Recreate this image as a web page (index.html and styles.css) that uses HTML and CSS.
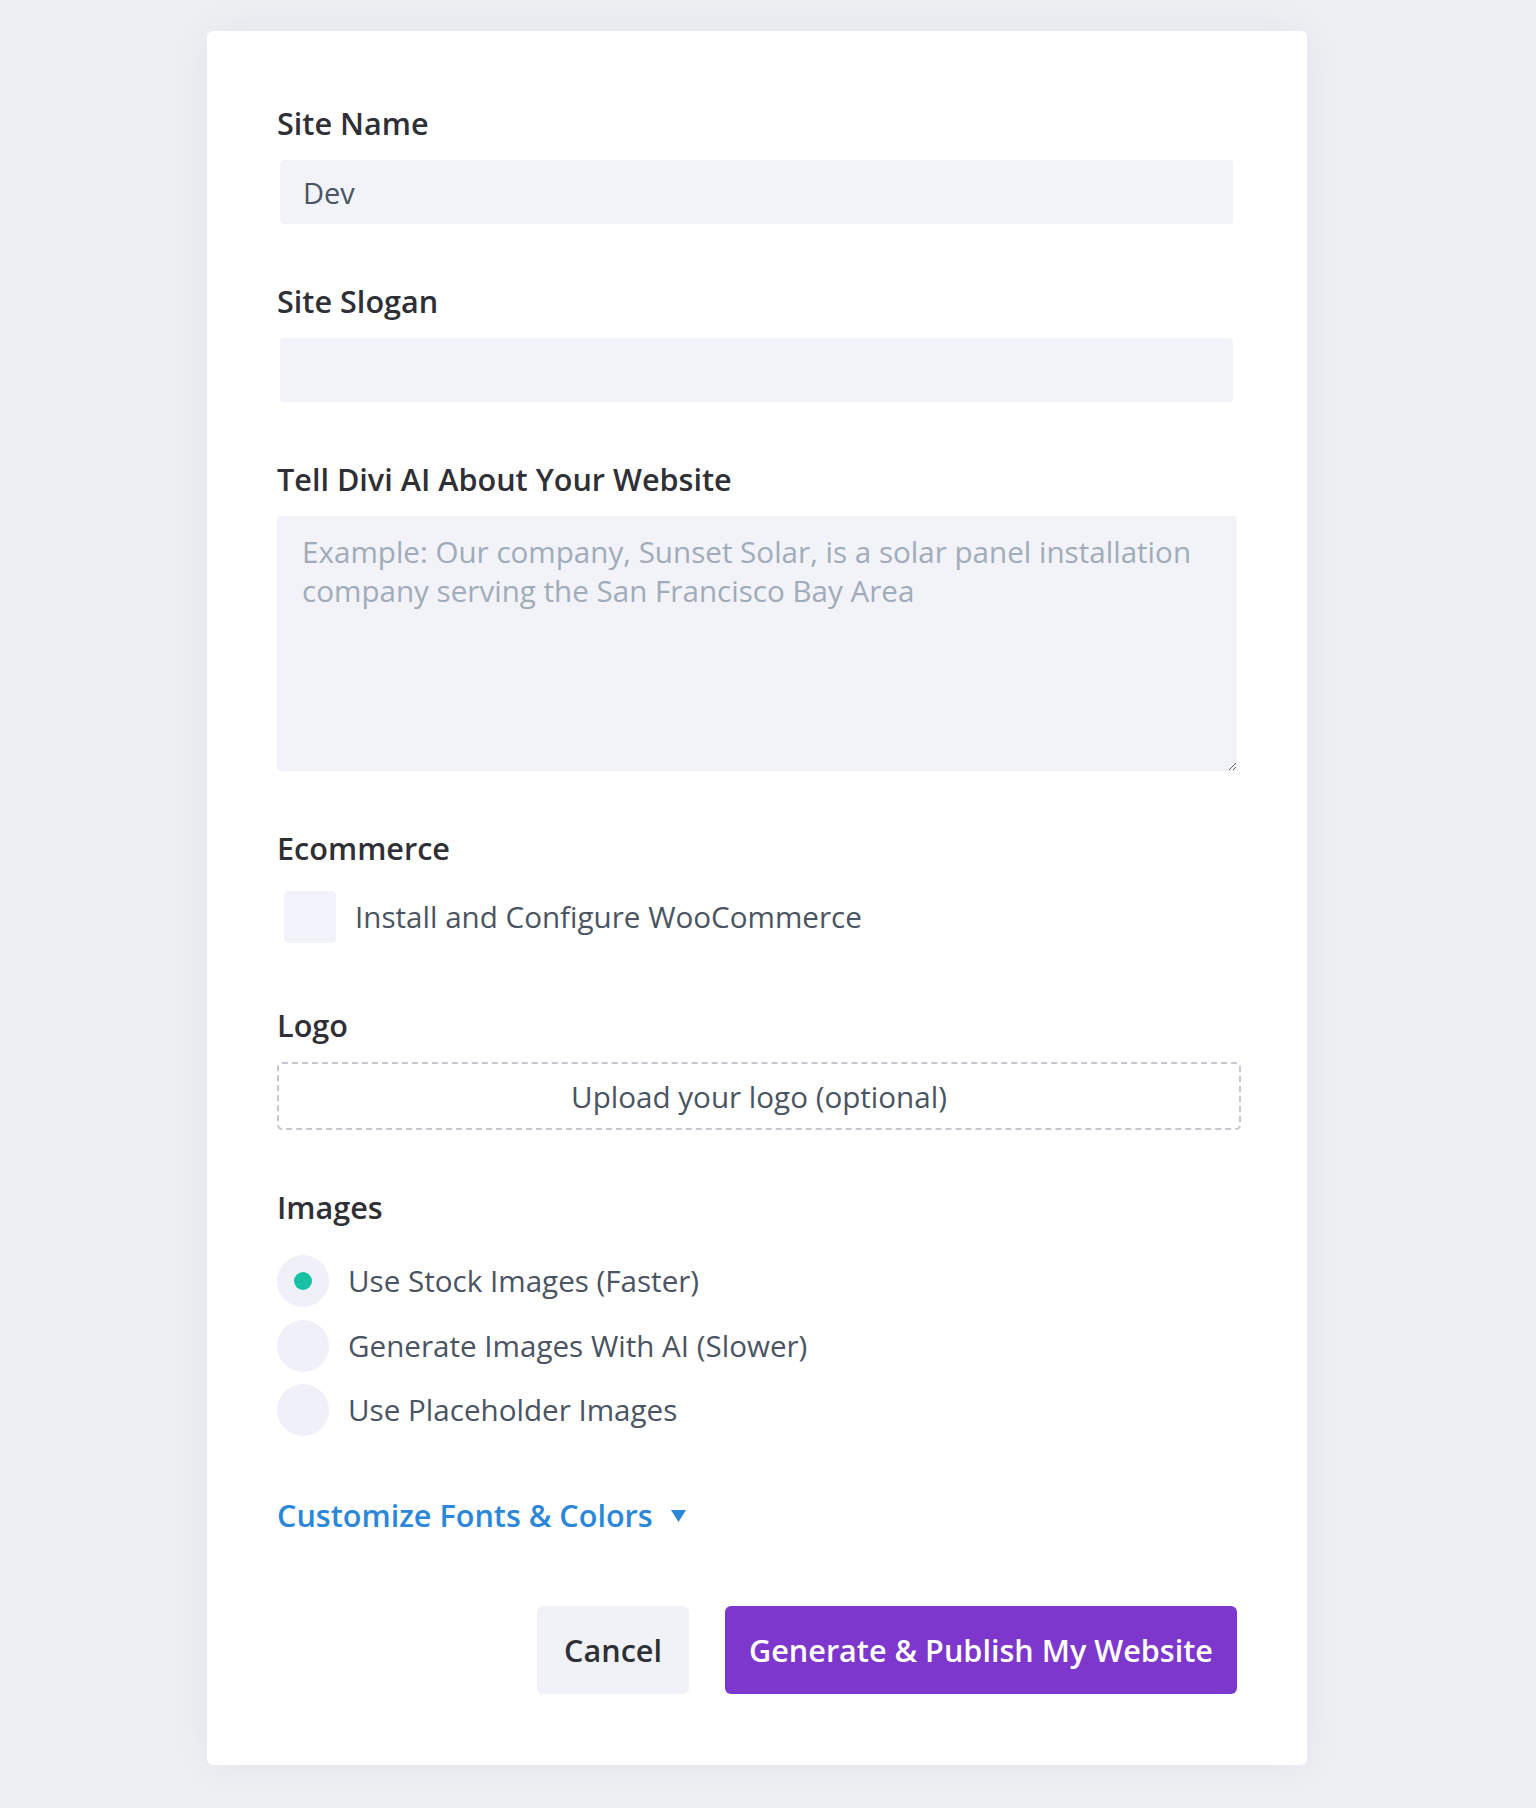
FILE: index.html
```html
<!DOCTYPE html>
<html lang="en">
<head>
<meta charset="utf-8">
<title>Divi AI – Generate Website</title>
<link rel="stylesheet" href="styles.css">
</head>
<body>
<div class="page">
  <form class="card">
    <div class="group">
      <label class="label" for="site-name">Site Name</label>
      <input class="field" id="site-name" type="text" value="Dev">
    </div>
    <div class="group">
      <label class="label" for="site-slogan">Site Slogan</label>
      <input class="field" id="site-slogan" type="text" value="">
    </div>
    <div class="group">
      <label class="label" for="about">Tell Divi AI About Your Website</label>
      <textarea class="area" id="about" placeholder="Example: Our company, Sunset Solar, is a solar panel installation company serving the San Francisco Bay Area"></textarea>
    </div>
    <div class="group">
      <div class="label">Ecommerce</div>
      <div class="check-row">
        <span class="checkbox"></span>
        <span class="option-text">Install and Configure WooCommerce</span>
      </div>
    </div>
    <div class="group">
      <div class="label">Logo</div>
      <div class="upload">Upload your logo (optional)</div>
    </div>
    <div class="group group-images">
      <div class="label">Images</div>
      <div class="radios">
        <div class="radio-row">
          <span class="radio"><span class="dot"></span></span>
          <span class="option-text">Use Stock Images (Faster)</span>
        </div>
        <div class="radio-row">
          <span class="radio"></span>
          <span class="option-text">Generate Images With AI (Slower)</span>
        </div>
        <div class="radio-row">
          <span class="radio"></span>
          <span class="option-text">Use Placeholder Images</span>
        </div>
      </div>
    </div>
    <div class="customize">
      <span>Customize Fonts &amp; Colors</span>
      <svg class="caret" width="15" height="12" viewBox="0 0 15 12"><polygon points="0,0 15,0 7.5,12" fill="#2b87da"/></svg>
    </div>
    <div class="actions">
      <button type="button" class="btn btn-cancel">Cancel</button>
      <button type="button" class="btn btn-primary">Generate &amp; Publish My Website</button>
    </div>
  </form>
</div>
</body>
</html>
```

FILE: styles.css
```css
* { box-sizing: border-box; }

html, body {
  margin: 0;
  padding: 0;
}

body {
  background: #eeeff3;
  font-family: "Open Sans", "Noto Sans", sans-serif;
  min-height: 1808px;
}

.page {
  padding-top: 31px;
  padding-left: 207px;
  padding-bottom: 42px;
}

.card {
  width: 1100px;
  background: #ffffff;
  border-radius: 6px;
  box-shadow: 0 0 40px rgba(40, 44, 90, 0.05);
  padding: 70px 70px 71px 70px;
  display: flex;
  flex-direction: column;
}

.group {
  display: flex;
  flex-direction: column;
  margin-bottom: 55px;
}

.group-images {
  margin-bottom: 57px;
}

.label {
  font-size: 30.6px;
  line-height: 45px;
  font-weight: 600;
  color: #2f3036;
  margin-bottom: 14px;
}

.field {
  display: block;
  height: 64px;
  margin: 0 4px 0 3px;
  border: none;
  border-radius: 4px;
  background: #f1f3f9;
  padding: 0 23px;
  font-family: inherit;
  font-size: 29px;
  color: #4a5462;
  outline: none;
}

.area {
  display: block;
  width: 100%;
  height: 255px;
  border: none;
  border-radius: 4px;
  background: #f1f3f9;
  padding: 16px 25px;
  font-family: inherit;
  font-size: 29.6px;
  line-height: 39px;
  color: #4a5462;
  resize: both;
  outline: none;
}

.area::placeholder {
  color: #a2abb8;
}

.check-row {
  display: flex;
  align-items: center;
  height: 63px;
  padding-left: 7px;
  gap: 19px;
}

.checkbox {
  width: 52px;
  height: 52px;
  border-radius: 5px;
  background: #f1f2fa;
  flex: none;
}

.option-text {
  font-size: 29.6px;
  line-height: 40px;
  color: #4a5462;
}

.upload {
  height: 68px;
  margin-right: -4px;
  border: 2px dashed #c3c7cf;
  border-radius: 5px;
  display: flex;
  align-items: center;
  justify-content: center;
  font-size: 29.6px;
  color: #4a5462;
}

.radios {
  display: flex;
  flex-direction: column;
  gap: 12.5px;
  margin-top: 11px;
}

.radio-row {
  display: flex;
  align-items: center;
  gap: 19px;
  height: 52px;
}

.radio {
  width: 52px;
  height: 52px;
  border-radius: 50%;
  background: #f0f1f8;
  flex: none;
  display: flex;
  align-items: center;
  justify-content: center;
}

.dot {
  width: 18px;
  height: 18px;
  border-radius: 50%;
  background: #17c1a4;
}

.customize {
  display: flex;
  align-items: center;
  gap: 18px;
  font-size: 30.6px;
  line-height: 45px;
  font-weight: 600;
  color: #2b87da;
  margin-bottom: 68px;
}

.caret {
  display: block;
  margin-top: 1px;
}

.actions {
  display: flex;
  justify-content: flex-end;
  gap: 36px;
}

.btn {
  height: 88px;
  border: none;
  border-radius: 6px;
  font-family: inherit;
  font-size: 30.6px;
  font-weight: 600;
  cursor: pointer;
}

.btn-cancel {
  background: #f1f2f8;
  color: #2f3036;
  padding: 0 27px;
}

.btn-primary {
  background: #7e37cd;
  color: #ffffff;
  padding: 0 24px;
}
```
